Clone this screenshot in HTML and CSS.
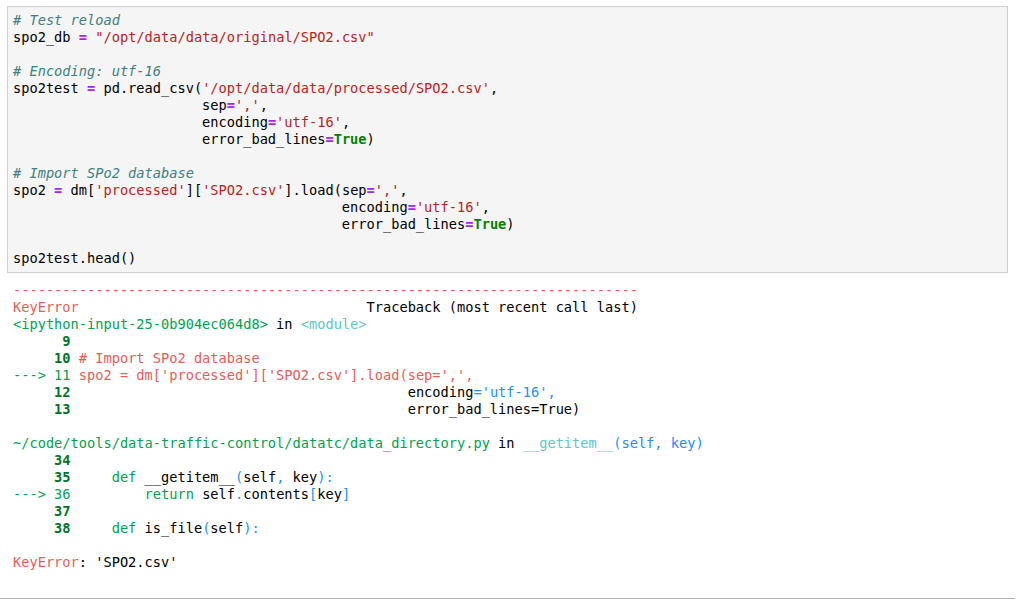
FILE: index.html
```
<!DOCTYPE html>
<html>
<head>
<meta charset="utf-8">
<link rel="stylesheet" href="styles.css">
</head>
<body>
<div class="cell">
<div class="input-area"><pre class="code"><span class="c"># Test reload</span>
spo2_db <span class="o">=</span> <span class="s">"/opt/data/data/original/SPO2.csv"</span>

<span class="c"># Encoding: utf-16</span>
spo2test <span class="o">=</span> pd.read_csv(<span class="s">'/opt/data/data/processed/SPO2.csv'</span>,
                       sep<span class="o">=</span><span class="s">','</span>,
                       encoding<span class="o">=</span><span class="s">'utf-16'</span>,
                       error_bad_lines<span class="o">=</span><span class="k">True</span>)

<span class="c"># Import SPo2 database</span>
spo2 <span class="o">=</span> dm[<span class="s">'processed'</span>][<span class="s">'SPO2.csv'</span>].load(sep<span class="o">=</span><span class="s">','</span>,
                                        encoding<span class="o">=</span><span class="s">'utf-16'</span>,
                                        error_bad_lines<span class="o">=</span><span class="k">True</span>)

spo2test.head()</pre></div>
<pre class="output"><span class="red">----------------------------------------------------------------------------</span>
<span class="red">KeyError</span>                                   Traceback (most recent call last)
<span class="green">&lt;ipython-input-25-0b904ec064d8&gt;</span> in <span class="cyan">&lt;module&gt;</span>
<span class="gb">      9</span> 
<span class="gb">     10</span> <span class="red"># Import SPo2 database</span>
<span class="green">---&gt; 11</span> <span class="red">spo2 = dm['processed']['SPO2.csv'].load(sep=',',</span>
<span class="gb">     12</span>                                         encoding<span class="blue">='utf-16',</span>
<span class="gb">     13</span>                                         error_bad_lines=True)

<span class="green">~/code/tools/data-traffic-control/datatc/data_directory.py</span> in <span class="cyan">__getitem__</span><span class="blue">(self, key)</span>
<span class="gb">     34</span> 
<span class="gb">     35</span>     <span class="green">def</span> __getitem__<span class="blue">(</span>self<span class="blue">,</span> key<span class="blue">):</span>
<span class="green">---&gt; 36</span>         <span class="green">return</span> self<span class="blue">.</span>contents<span class="blue">[</span>key<span class="blue">]</span>
<span class="gb">     37</span> 
<span class="gb">     38</span>     <span class="green">def</span> is_file<span class="blue">(</span>self<span class="blue">):</span>

<span class="red">KeyError</span>: 'SPO2.csv'</pre>
</div>
<div class="next-cell"></div>
</body>
</html>
```
FILE: styles.css
```
html, body {
  margin: 0;
  padding: 0;
  background: #ffffff;
}

body {
  width: 1025px;
  height: 600px;
  overflow: hidden;
}

.cell {
  padding: 6px 0 0 7px;
}

.input-area {
  background: #f5f5f5;
  border: 1px solid #cfcfcf;
  padding: 5px 0 5px 5px;
  box-sizing: content-box;
  width: 994px;
}

pre {
  margin: 0;
  font-family: "DejaVu Sans Mono", "Liberation Mono", monospace;
  font-size: 13.67px;
  line-height: 17px;
  color: #000;
  white-space: pre;
}

.output {
  margin-top: 9px;
  padding-left: 6px;
  height: 290px;
}

.c { color: #408080; font-style: italic; }
.o { color: #aa22ff; font-weight: bold; }
.s { color: #ba2121; }
.k { color: #008000; font-weight: bold; }

.red { color: #e75c58; }
.green { color: #00a250; }
.gb { color: #007427; font-weight: bold; }
.cyan { color: #60c6c8; }
.blue { color: #208ffb; }

.next-cell {
  margin-top: 26px;
  width: 1015px;
  border-top: 1px solid #b0b0b0;
}
```
